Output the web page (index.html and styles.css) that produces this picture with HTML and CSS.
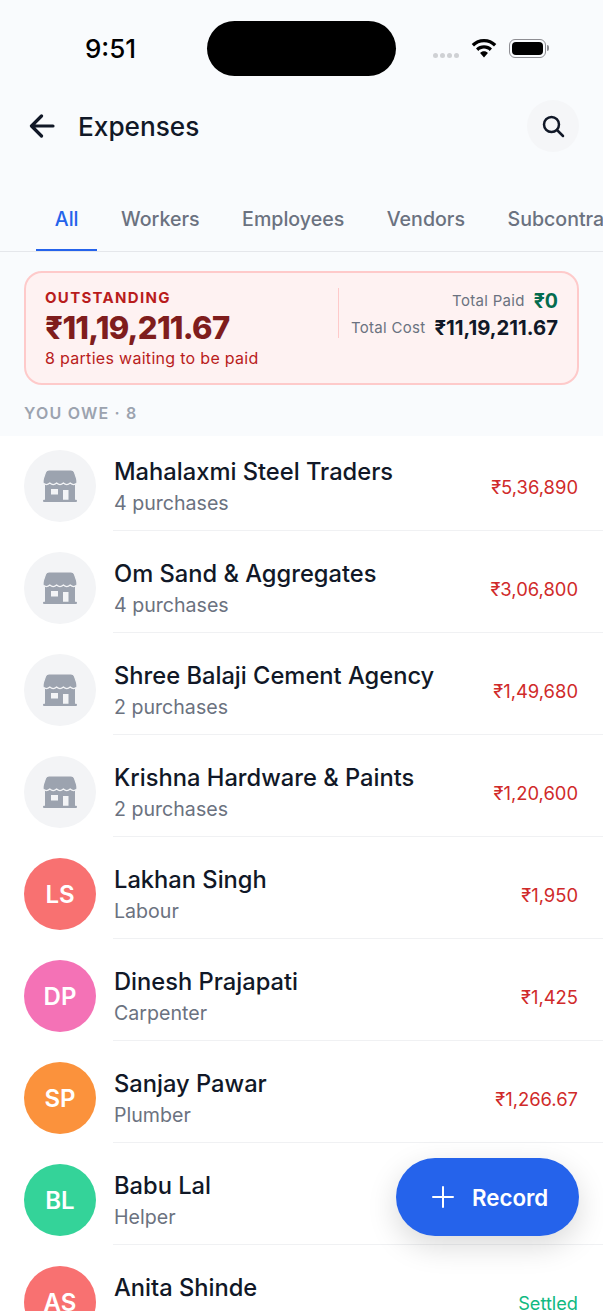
FILE: index.html
```html
<!DOCTYPE html>
<html lang="en">
<head>
    <meta charset="UTF-8">
    <meta name="viewport" content="width=device-width, initial-scale=1.0">
    <title>Expenses</title>
    <link rel="stylesheet" href="styles.css">
</head>
<body>
    <div class="screen">
        <div class="status-bar">
            <div class="time">9:51</div>
            <div class="island"></div>
            <div class="status-icons">
                <div class="signal"><span></span><span></span><span></span><span></span></div>
                <svg class="wifi" width="26" height="19" viewBox="0 0 26 19">
                    <path d="M13 0C8.200 0 3.900 1.900.7 5l2.300 2.400C5.600 4.900 9.100 3.300 13 3.300s7.400 1.600 10 4.100L25.300 5C22.100 1.900 17.800 0 13 0z"/>
                    <path d="M13 6.300c-3.100 0-5.900 1.200-8 3.200l2.300 2.400c1.500-1.400 3.500-2.300 5.700-2.300s4.200.9 5.700 2.300L21 9.500c-2.100-2-4.900-3.200-8-3.200z"/>
                    <path d="M13 12.300c-1.500 0-2.900.6-3.900 1.600L13 18.500l3.900-4.600c-1-1-2.400-1.600-3.900-1.600z"/>
                </svg>
                <div class="battery"><div class="battery-fill"></div></div>
            </div>
        </div>

        <div class="header">
            <svg class="back" width="26" height="24" viewBox="0 0 26 24" fill="none" stroke="#111827" stroke-width="3.200" stroke-linecap="round" stroke-linejoin="round">
                <path d="M24 12H3M12.500 2L2.500 12l10 10"/>
            </svg>
            <h1>Expenses</h1>
            <div class="search-btn">
                <svg width="24" height="24" viewBox="0 0 24 24" fill="none" stroke="#111827" stroke-width="2.500" stroke-linecap="round">
                    <circle cx="10.500" cy="10.500" r="7.500"/>
                    <path d="M16 16l6 6"/>
                </svg>
            </div>
        </div>

        <div class="tabs">
            <div class="tab active">All</div>
            <div class="tab">Workers</div>
            <div class="tab">Employees</div>
            <div class="tab">Vendors</div>
            <div class="tab">Subcontractors</div>
        </div>

        <div class="summary">
            <div class="summary-left">
                <div class="summary-label">OUTSTANDING</div>
                <div class="summary-amount">₹11,19,211.67</div>
                <div class="summary-note">8 parties waiting to be paid</div>
            </div>
            <div class="summary-right">
                <div class="summary-line"><span>Total Paid</span><b class="paid">₹0</b></div>
                <div class="summary-line"><span>Total Cost</span><b class="cost">₹11,19,211.67</b></div>
            </div>
        </div>

        <div class="section-title">YOU OWE · 8</div>

        <svg width="0" height="0" class="defs">
            <symbol id="store" viewBox="0 0 34 32">
                <path fill-rule="evenodd" d="M2 12h30v18H2zM8 19v5.500h7V19zm12 1v10h5.500V20z"/>
                <rect x="0" y="29.800" width="34" height="2.200" rx="1"/>
                <path class="awning" d="M6 0h22c1.800 0 3 .9 3.500 2.400L33.600 8.500c.4 1.200.4 2.500.4 4.500q-3.400 3.200-6.800 0q-3.400 3.200-6.800 0q-3.400 3.200-6.800 0q-3.400 3.200-6.800 0q-3.400 3.200-6.800 0c0-2 0-3.300.4-4.500L2.500 2.400C3 .9 4.200 0 6 0z"/>
            </symbol>
        </svg>

        <div class="list">
            <div class="row">
                <div class="avatar vendor"><svg width="34" height="32"><use href="#store"/></svg></div>
                <div class="row-body">
                    <div class="row-text"><div class="name">Mahalaxmi Steel Traders</div><div class="sub">4 purchases</div></div>
                    <div class="due">₹5,36,890</div>
                </div>
            </div>
            <div class="row">
                <div class="avatar vendor"><svg width="34" height="32"><use href="#store"/></svg></div>
                <div class="row-body">
                    <div class="row-text"><div class="name">Om Sand &amp; Aggregates</div><div class="sub">4 purchases</div></div>
                    <div class="due">₹3,06,800</div>
                </div>
            </div>
            <div class="row">
                <div class="avatar vendor"><svg width="34" height="32"><use href="#store"/></svg></div>
                <div class="row-body">
                    <div class="row-text"><div class="name">Shree Balaji Cement Agency</div><div class="sub">2 purchases</div></div>
                    <div class="due">₹1,49,680</div>
                </div>
            </div>
            <div class="row">
                <div class="avatar vendor"><svg width="34" height="32"><use href="#store"/></svg></div>
                <div class="row-body">
                    <div class="row-text"><div class="name">Krishna Hardware &amp; Paints</div><div class="sub">2 purchases</div></div>
                    <div class="due">₹1,20,600</div>
                </div>
            </div>
            <div class="row">
                <div class="avatar red">LS</div>
                <div class="row-body">
                    <div class="row-text"><div class="name">Lakhan Singh</div><div class="sub">Labour</div></div>
                    <div class="due">₹1,950</div>
                </div>
            </div>
            <div class="row">
                <div class="avatar pink">DP</div>
                <div class="row-body">
                    <div class="row-text"><div class="name">Dinesh Prajapati</div><div class="sub">Carpenter</div></div>
                    <div class="due">₹1,425</div>
                </div>
            </div>
            <div class="row">
                <div class="avatar orange">SP</div>
                <div class="row-body">
                    <div class="row-text"><div class="name">Sanjay Pawar</div><div class="sub">Plumber</div></div>
                    <div class="due">₹1,266.67</div>
                </div>
            </div>
            <div class="row">
                <div class="avatar green">BL</div>
                <div class="row-body">
                    <div class="row-text"><div class="name">Babu Lal</div><div class="sub">Helper</div></div>
                    <div class="due"></div>
                </div>
            </div>
            <div class="row">
                <div class="avatar red">AS</div>
                <div class="row-body">
                    <div class="row-text"><div class="name">Anita Shinde</div></div>
                    <div class="settled">Settled</div>
                </div>
            </div>
        </div>

        <div class="fab">
            <svg width="22" height="22" viewBox="0 0 22 22" stroke="#fff" stroke-width="2" stroke-linecap="round"><path d="M11 1v20M1 11h20"/></svg>
            <span>Record</span>
        </div>
    </div>
</body>
</html>
```
FILE: styles.css
```css
* {
    box-sizing: border-box;
}

html, body {
    margin: 0;
    height: 100%;
    overflow: hidden;
}

body {
    font-family: 'Inter', 'Liberation Sans', sans-serif;
    background-color: #f9fbfd;
    color: #111827;
}

.screen {
    position: relative;
    height: 1311px;
    overflow: hidden;
}

/* status bar */
.status-bar {
    display: grid;
    grid-template-columns: 207px 189px 1fr;
    height: 76px;
    padding-top: 21px;
}

.time {
    font-size: 26px;
    font-weight: 500;
    color: #000;
    text-align: right;
    padding: 12px 71px 0 0;
    line-height: 32px;
}

.island {
    background-color: #000;
    border-radius: 28px;
}

.status-icons {
    display: flex;
    align-items: center;
    height: 55px;
    padding: 0 0 0 37px;
}

.signal {
    display: flex;
    gap: 2px;
    margin: 13px 12px 0 0;
}

.signal span {
    width: 5px;
    height: 5px;
    border-radius: 50%;
    background-color: #cfd1d4;
}

.wifi {
    margin-right: 12px;
    margin-top: -1px;
}

.battery {
    position: relative;
    width: 37px;
    height: 19px;
    border: 1.500px solid #8e8e93;
    border-radius: 6px;
    padding: 2px;
}

.battery::after {
    content: "";
    position: absolute;
    right: -4px;
    top: 5px;
    width: 2px;
    height: 6px;
    border-radius: 0 2px 2px 0;
    background-color: #8e8e93;
}

.battery-fill {
    height: 100%;
    background-color: #000;
    border-radius: 4px;
}

/* header */
.header {
    display: flex;
    align-items: center;
    height: 52px;
    margin-top: 24px;
    padding: 0 24px 0 29px;
}

.back {
    margin-right: 23px;
}

h1 {
    flex: 1;
    margin: 0;
    font-size: 26.200px;
    font-weight: 550;
    color: #111827;
}

.search-btn {
    display: flex;
    align-items: center;
    justify-content: center;
    width: 52px;
    height: 52px;
    border-radius: 50%;
    background-color: #f5f6f8;
}

/* tabs */
.tabs {
    display: flex;
    gap: 5px;
    height: 73px;
    margin-top: 27px;
    padding: 0 0 0 36px;
    border-bottom: 1px solid #e5e7eb;
    overflow: hidden;
}

.tab {
    flex-shrink: 0;
    height: 73px;
    padding: 29px 18.750px 0;
    font-size: 19.600px;
    font-weight: 500;
    line-height: 23px;
    color: #6b7280;
    white-space: nowrap;
}

.tab.active {
    color: #2563eb;
    border-bottom: 3px solid #2563eb;
}

/* summary card */
.summary {
    display: flex;
    justify-content: space-between;
    height: 114px;
    margin: 19px 24px 0;
    padding: 15px 19px 0;
    background-color: #fef2f2;
    border: 2px solid #fecaca;
    border-radius: 18px;
}

.summary-label {
    font-size: 15px;
    font-weight: 700;
    letter-spacing: 1.300px;
    line-height: 20px;
    color: #b91c1c;
}

.summary-amount {
    font-size: 31px;
    font-weight: 800;
    letter-spacing: -0.700px;
    line-height: 40px;
    color: #7f1d1d;
}

.summary-note {
    font-size: 16px;
    letter-spacing: 0.300px;
    line-height: 20px;
    color: #b91c1c;
}

.summary-right {
    display: flex;
    flex-direction: column;
    gap: 5px;
    height: 50px;
    padding: 2px 0 0 12px;
    border-left: 1px solid #fecaca;
}

.summary-line {
    display: flex;
    justify-content: flex-end;
    align-items: center;
    gap: 9px;
    font-size: 15px;
    letter-spacing: 0.300px;
    color: #6b7280;
    line-height: 22px;
}

.paid {
    font-size: 19.500px;
    font-weight: 700;
    letter-spacing: 0;
    color: #046c4e;
}

.cost {
    font-size: 20.300px;
    font-weight: 700;
    letter-spacing: 0;
    color: #111827;
}

.section-title {
    height: 51px;
    padding: 18px 24px 0;
    font-size: 16px;
    font-weight: 600;
    letter-spacing: 1.200px;
    line-height: 20px;
    color: #9ca3af;
}

/* list */
.list {
    background-color: #fff;
}

.row {
    display: flex;
    gap: 17px;
    height: 102px;
    padding: 14px 0 0 24px;
}

.avatar {
    display: flex;
    flex-shrink: 0;
    align-items: center;
    justify-content: center;
    width: 72px;
    height: 72px;
    border-radius: 50%;
    font-size: 24px;
    font-weight: 600;
    color: #fff;
}

.avatar.vendor {
    background-color: #f3f4f6;
    fill: #9ca3af;
}

.awning {
    stroke: #f3f4f6;
    stroke-width: 1.200;
}

.avatar.red {
    background-color: #f87171;
}

.avatar.pink {
    background-color: #f472b6;
}

.avatar.orange {
    background-color: #fb923c;
}

.avatar.green {
    background-color: #34d399;
}

.row-body {
    display: flex;
    flex: 1;
    justify-content: space-between;
    height: 81px;
    padding: 5px 25px 0 1px;
    border-bottom: 1px solid #f0f1f3;
}

.name {
    font-size: 23.700px;
    font-weight: 550;
    line-height: 34px;
    color: #111827;
}

.sub {
    font-size: 19.600px;
    line-height: 28px;
    color: #6b7280;
}

.due {
    font-size: 18.400px;
    padding-top: 20px;
    line-height: 24px;
    color: #d02a2a;
}

.settled {
    font-size: 18.200px;
    padding-top: 20px;
    line-height: 24px;
    color: #10b981;
}

.defs {
    position: absolute;
}

/* floating button */
.fab {
    position: absolute;
    left: 396px;
    top: 1158px;
    display: flex;
    align-items: center;
    gap: 18px;
    width: 183px;
    height: 78px;
    padding-left: 36px;
    border-radius: 39px;
    background-color: #2563eb;
    box-shadow: 0 10px 30px rgba(0, 0, 0, 0.15);
    font-size: 22.300px;
    font-weight: 600;
    color: #fff;
}
```
